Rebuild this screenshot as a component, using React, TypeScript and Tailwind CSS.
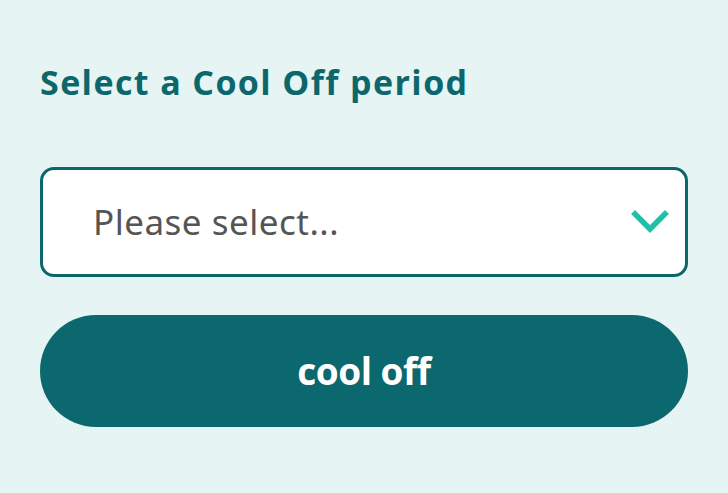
export default function App() {
  return (
    <div className="w-[728px] h-[493px] bg-[#e6f4f4] px-10 pt-[60px] font-['Open_Sans',sans-serif]">
      <h2 className="text-[34px] font-bold leading-[44px] text-[#0c676c] tracking-[1.4px]">
        Select a Cool Off period
      </h2>

      <div className="mt-[63px] h-[110px] rounded-[14px] border-[3px] border-[#0c676c] bg-white flex items-center justify-between pl-[50px] pr-[16px]">
        <span className="text-[35px] text-[#555555] font-['Noto_Sans',sans-serif] tracking-[0.5px]">
          Please select...
        </span>
        <svg width="38" height="24" viewBox="0 0 38 24" fill="none" aria-hidden="true">
          <polyline points="4,4 19,19 34,4" stroke="#1fbfa8" strokeWidth="5.5" strokeLinecap="square" />
        </svg>
      </div>

      <button className="mt-[38px] w-full h-[112px] rounded-full bg-[#0b686e] text-white text-[37px] font-bold tracking-[-0.5px]">
        cool off
      </button>
    </div>
  );
}
